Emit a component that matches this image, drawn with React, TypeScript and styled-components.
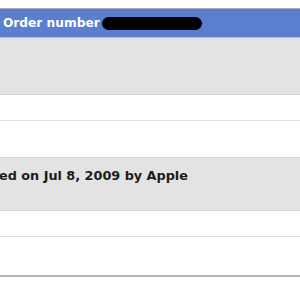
import styled, { createGlobalStyle } from 'styled-components'

const Global = createGlobalStyle`
  body {
    margin: 0;
    background: #ffffff;
    font-family: "DejaVu Sans", Verdana, sans-serif;
  }
`

const Page = styled.div`
  width: 300px;
  height: 300px;
  overflow: hidden;
  padding-top: 8px;
  box-sizing: border-box;
`

const Header = styled.div`
  display: flex;
  align-items: center;
  height: 28px;
  padding-left: 3px;
  background: #5a7fd0;
  border-top: 1px solid #a9aeb8;
  border-bottom: 1px solid #b9bcc2;
  color: #ffffff;
  font-size: 12.2px;
  font-weight: bold;
  white-space: nowrap;
`

const Redacted = styled.span`
  display: inline-block;
  width: 100px;
  height: 13px;
  margin-left: 2px;
  border-radius: 7px;
  background: #000000;
`

const Row = styled.div<{ $gray?: boolean; $h: number; $line?: string; $lineW?: number }>`
  height: ${(p) => p.$h}px;
  background: ${(p) => (p.$gray ? '#e3e3e3' : '#ffffff')};
  border-bottom: ${(p) => p.$lineW ?? 1}px solid ${(p) => p.$line ?? '#e0e0e0'};
  color: #1c1c1c;
  font-size: 12.8px;
  font-weight: bold;
  white-space: nowrap;
  overflow: hidden;
`

const Meta = styled.div`
  padding-top: 10px;
  margin-left: -1px;
`

export default function App() {
  return (
    <Page>
      <Global />
      <Header>
        Order number<Redacted />
      </Header>
      <Row $gray $h={56} $line="#d6d6d6" />
      <Row $h={25} />
      <Row $h={36} $line="#d6d6d6" />
      <Row $gray $h={52} $line="#d6d6d6">
        <Meta>ed on Jul 8, 2009 by Apple</Meta>
      </Row>
      <Row $h={25} />
      <Row $h={38} $line="#b3b7bf" $lineW={2} />
    </Page>
  )
}
